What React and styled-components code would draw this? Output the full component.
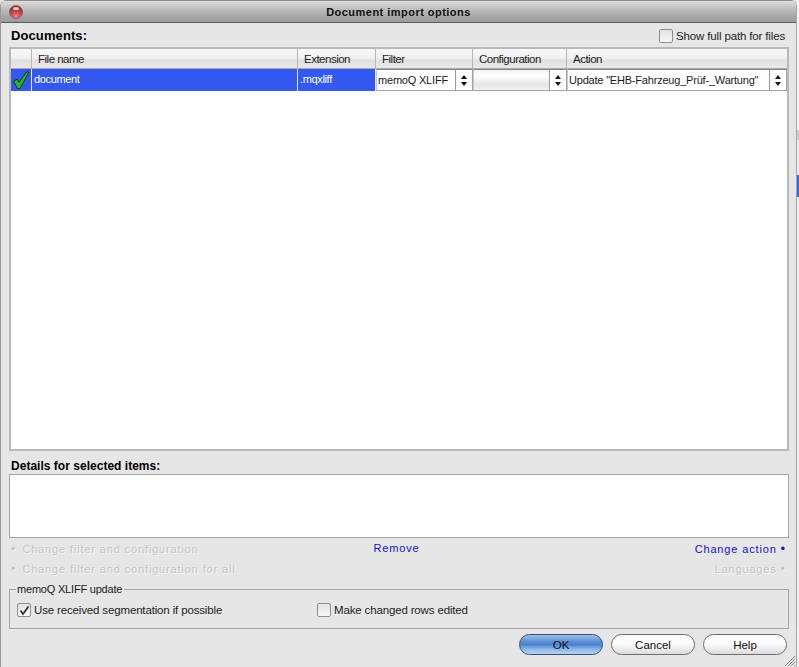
import React from "react";
import styled, { createGlobalStyle } from "styled-components";

const Global = createGlobalStyle`
  html, body { margin: 0; padding: 0; background: #e6e6e6; overflow: hidden; }
  * { box-sizing: border-box; }
  #root { width: 799px; height: 667px; font-family: "Liberation Sans", Arial, sans-serif; font-size: 12px; color: #111; }
`;

const Screen = styled.div`
  width: 799px; height: 667px; display: flex; overflow: hidden; background: #e8e8e8;
`;
const Win = styled.div`
  width: 797px; height: 667px; display: flex; flex-direction: column;
  background: #e6e6e6; border-left: 1px solid #9a9a9a; border-right: 1px solid #a5a5a5;
  border-top-left-radius: 6px; border-top-right-radius: 6px; overflow: hidden; position: relative;
`;
const Behind = styled.div`
  width: 2px; height: 667px; display: flex; flex-direction: column; background: #f2f2f2;
`;
const BehindGap = styled.div`
  height: ${p => p.$h}px; flex: none; background: ${p => p.$c};
`;
const TitleBar = styled.div`
  height: 23px; flex: none; display: flex; align-items: center; justify-content: center; position: relative;
  background: linear-gradient(#dcdcdc 0, #c4c4c4 30%, #a6a6a6 75%, #9c9c9c 100%);
  border-top: 1px solid #8f8f8f; border-bottom: 1px solid #5c5c5c;
`;
const TitleText = styled.div`
  font-weight: bold; font-size: 11px; letter-spacing: 0.47px; color: #111; margin-top: 1px;
`;
const CloseDot = styled.div`
  position: absolute; left: 8px; top: 4px; width: 14px; height: 14px; border-radius: 50%; border: 1px solid #8a5c5c;
  background: radial-gradient(circle at 50% 90%, #e88a8a 0, #c84f4f 40%, #a32f2f 75%);
  &::after { content: ""; position: absolute; left: 3px; top: 1px; width: 6px; height: 3px; border-radius: 50%; background: #eec4c4; }
`;
const Body = styled.div`
  flex: 1; min-height: 0; display: flex; flex-direction: column; padding: 0 7px 0 8px;
`;
const TopRow = styled.div`
  height: 24px; flex: none; display: flex; align-items: center; justify-content: space-between; padding: 1px 4px 0 2px;
`;
const Heading = styled.div`
  font-weight: bold; font-size: ${p => p.$size || 13}px; color: #000; letter-spacing: ${p => p.$ls || 0}px;
`;
const CheckLabel = styled.label`
  display: flex; align-items: center; gap: 3px; font-size: 11.5px; color: #222; letter-spacing: -0.15px; line-height: 14px;
`;
const Box = styled.span`
  width: 14px; height: 14px; flex: none; border: 1px solid #8e8e8e; border-radius: 2px; display: flex; align-items: center; justify-content: center;
  background: linear-gradient(#e2e2e2, #f8f8f8);
`;
const Table = styled.div`
  height: 404px; flex: none; background: #fff; border: 2px solid #b9b9b9; display: flex; flex-direction: column;
`;
const Cols = `21px 266px 78px 97px 94px 1fr`;
const HeadRow = styled.div`
  height: 20px; flex: none; display: grid; grid-template-columns: ${Cols};
  background: linear-gradient(#f8f8f8 0, #f1f1f1 45%, #e0e0e0 60%, #e9e9e9 100%); border-bottom: 1px solid #a8a8a8;
`;
const HeadCell = styled.div`
  font-size: 11.5px; color: #222; padding: 2px 0 0 6px; letter-spacing: -0.5px; border-right: 1px solid #b5b5b5; line-height: 16px;
  &:last-child { border-right: 0; }
`;
const DataRow = styled.div`
  height: 22px; flex: none; display: grid; grid-template-columns: ${Cols}; background: #3459f0;
`;
const DataCell = styled.div`
  color: #fff; font-size: 11px; padding: 3px 0 0 2px; line-height: 15px; letter-spacing: -0.35px; border-right: 1px solid #e8ecff;
  display: flex; align-items: flex-start;
`;
const TickCell = styled(DataCell)`
  padding: 0; justify-content: center; align-items: center;
`;
const Select = styled.div`
  display: flex; background: #fff; border: 1px solid #9fa3ad; border-top-color: #8a8a8a; border-left-color: #c8c8c8; min-width: 0; height: 22px;
`;
const SelectText = styled.div`
  flex: 1; min-width: 0; padding: 2px 0 0 1px; line-height: 16px; font-size: 11px; color: #1a1a1a; white-space: nowrap; letter-spacing: -0.2px; overflow: hidden;
  background: ${p => p.$empty ? "linear-gradient(#f2f2f2, #fff 30%, #e6e6e6 70%, #f0f0f0)" : "#fff"};
`;
const Stepper = styled.div`
  width: 17px; flex: none; background: #fff; border-left: 1px solid #9a9a9a; display: flex; align-items: center; justify-content: center;
`;
const Details = styled.div`
  height: 64px; flex: none; background: #fff; border: 1px solid #a5a5a5;
`;
const LinkRows = styled.div`
  flex: none; display: flex; flex-direction: column;
`;
const LinkRow = styled.div`
  height: 20px; display: grid; grid-template-columns: 1fr 1fr 1fr; align-items: center; padding: 0 3px 0 2px;
`;
const Link = styled.div`
  font-size: 11px; letter-spacing: 0.83px; white-space: nowrap; color: ${p => p.$on ? "#1212cc" : "#c6c6c6"};
  text-align: ${p => p.$align || "left"};
  text-shadow: ${p => p.$on ? "none" : "1px 1px 0 #f4f4f4"};
  word-spacing: 0.2px;
  padding-right: ${p => p.$align === "center" ? 4 : 0}px;
`;
const Bullet = styled.span`
  margin: ${p => p.$right ? "0 0 0 4px" : "0 6px 0 0"};
  font-size: 13px;
`;
const Heading2 = styled(Heading)`
  margin-top: 7px; height: 16px; line-height: 16px; padding-left: 2px;
`;
const Group = styled.fieldset`
  margin: 5px 0 0; padding: 0 0 0 7px; height: 46px; flex: none; border: 1px solid #a5a5a5; display: flex; position: relative;
  width: 100%; align-items: flex-start; min-inline-size: 0;
`;
const Legend = styled.legend`
  font-size: 11px; letter-spacing: -0.2px; padding: 0 2px 0 1px; margin-left: -1px; color: #1a1a1a; line-height: 12px;
`;
const GroupRow = styled.div`
  display: grid; grid-template-columns: 300px 1fr; align-items: center; width: 100%; padding-top: 8px;
`;
const Footer = styled.div`
  flex: 1; display: flex; justify-content: flex-end; gap: 8px; padding: 5px 2px 0 0; position: relative;
`;
const Btn = styled.div`
  width: 84px; height: 21px; border-radius: 11px; display: flex; align-items: center; justify-content: center; font-size: 11.5px; color: #111;
  border: 1px solid ${p => p.$primary ? "#3a4c7a" : "#6e6e6e"};
  background: ${p => p.$primary
    ? "linear-gradient(#9fc0ea 0, #5a8fd6 35%, #4a82cc 50%, #8db8ea 75%, #b6d4f4 100%)"
    : "linear-gradient(#f6f6f6 0, #fdfdfd 40%, #f4f4f4 60%, #dcdcdc 100%)"};
`;
const Grip = styled.svg`
  position: absolute; right: -7px; bottom: 0; width: 14px; height: 14px;
`;

const Arrows = () => (
  <svg width="6" height="13" viewBox="0 0 6 13"><path d="M3 1 6 5H0zM3 12 0 8h6z" fill="#111" /></svg>
);
const Tick = () => (
  <svg width="18" height="19" viewBox="0 0 18 19">
    <path d="M1.5 10.5 5 8l2 3.5L14.5 1h2.5L8 17.5H5.5z" fill="#28b828" stroke="#053a05" strokeWidth="1" strokeLinejoin="round" />
  </svg>
);
const SmallTick = () => (
  <svg width="11" height="11" viewBox="0 0 11 11"><path d="M1.5 5.5 4 9l5.5-7.5" fill="none" stroke="#333" strokeWidth="1.8" /></svg>
);
const Dropdown = ({ children, empty }) => (
  <Select>
    <SelectText $empty={empty}>{children}</SelectText>
    <Stepper><Arrows /></Stepper>
  </Select>
);

export default function App() {
  return (
    <Screen>
      <Global />
      <Win>
        <TitleBar>
          <CloseDot />
          <TitleText>Document import options</TitleText>
        </TitleBar>
        <Body>
          <TopRow>
            <Heading $ls={0.1}>Documents:</Heading>
            <CheckLabel><Box />Show full path for files</CheckLabel>
          </TopRow>
          <Table>
            <HeadRow>
              <HeadCell />
              <HeadCell>File name</HeadCell>
              <HeadCell>Extension</HeadCell>
              <HeadCell>Filter</HeadCell>
              <HeadCell>Configuration</HeadCell>
              <HeadCell>Action</HeadCell>
            </HeadRow>
            <DataRow>
              <TickCell><Tick /></TickCell>
              <DataCell>document</DataCell>
              <DataCell>.mqxliff</DataCell>
              <Dropdown>memoQ XLIFF</Dropdown>
              <Dropdown empty />
              <Dropdown>Update "EHB-Fahrzeug_Prüf-_Wartung"</Dropdown>
            </DataRow>
          </Table>
          <Heading2 $size={12} $ls={0.02}>Details for selected items:</Heading2>
          <Details />
          <LinkRows>
            <LinkRow>
              <Link><Bullet>•</Bullet>Change filter and configuration</Link>
              <Link $on $align="center">Remove</Link>
              <Link $on $align="right">Change action<Bullet $right>•</Bullet></Link>
            </LinkRow>
            <LinkRow>
              <Link><Bullet>•</Bullet>Change filter and configuration for all</Link>
              <span />
              <Link $align="right">Languages<Bullet $right>•</Bullet></Link>
            </LinkRow>
          </LinkRows>
          <Group>
            <Legend>memoQ XLIFF update</Legend>
            <GroupRow>
              <CheckLabel><Box><SmallTick /></Box>Use received segmentation if possible</CheckLabel>
              <CheckLabel><Box />Make changed rows edited</CheckLabel>
            </GroupRow>
          </Group>
          <Footer>
            <Btn $primary>OK</Btn>
            <Btn>Cancel</Btn>
            <Btn>Help</Btn>
            <Grip viewBox="0 0 14 14"><path d="M13 3 3 13M13 6 6 13M13 9 9 13M13 12 12 13" stroke="#8a8a8a" strokeWidth="1" /></Grip>
          </Footer>
        </Body>
      </Win>
      <Behind>
        <BehindGap $h={130} $c="#f4f4f4" />
        <BehindGap $h={10} $c="#d0d0d0" />
        <BehindGap $h={35} $c="#eeeeee" />
        <BehindGap $h={22} $c="#3a66e0" />
        <BehindGap $h={430} $c="#efefef" />
      </Behind>
    </Screen>
  );
}
